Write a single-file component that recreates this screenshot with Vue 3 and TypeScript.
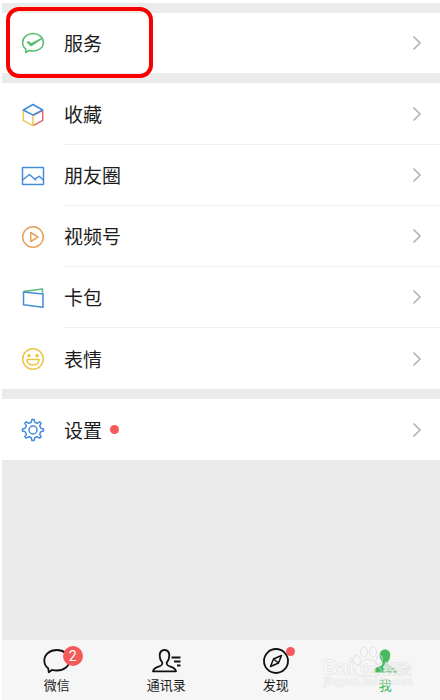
<script setup lang="ts">
import { ref } from 'vue'

interface Item {
  id: string
  label: string
  dot?: boolean
}

interface Tab {
  id: string
  label: string
  badge?: number
  dot?: boolean
}

const groups: Item[][] = [
  [{ id: 'service', label: '服务' }],
  [
    { id: 'favorites', label: '收藏' },
    { id: 'moments', label: '朋友圈' },
    { id: 'channels', label: '视频号' },
    { id: 'cards', label: '卡包' },
    { id: 'stickers', label: '表情' },
  ],
  [{ id: 'settings', label: '设置', dot: true }],
]

const tabs: Tab[] = [
  { id: 'chats', label: '微信', badge: 2 },
  { id: 'contacts', label: '通讯录' },
  { id: 'discover', label: '发现', dot: true },
  { id: 'me', label: '我' },
]

const active = ref('me')
</script>

<template>
  <div class="page">
    <main class="content">
      <section v-for="(group, index) in groups" :key="index" class="group">
        <button v-for="item in group" :key="item.id" type="button" class="row">
          <svg class="icon" viewBox="0 0 24 24" aria-hidden="true">
            <g v-if="item.id === 'service'" stroke="#5abe72">
              <path d="M5 18.3C2.8 16.7 1.6 14.4 1.6 11.7C1.6 6.4 6.2 2.600 12 2.600S22.400 6.400 22.400 11.500S17.800 20 12 20C10.700 20 9.500 19.800 8.400 19.500L4.600 21.500Z" />
              <path d="M6.600 11.300L10.200 14.600L20.800 7.400L10.300 12.800L7.300 10.800Z" fill="#5abe72" />
            </g>
            <g v-else-if="item.id === 'favorites'">
              <path d="M2.300 7.500V17.400L12 22.700V12.500" stroke="#efc359" />
              <path d="M21.700 7.500V17.400L12.700 22.300M12.500 12.200L21.700 7.300" stroke="#e5666b" />
              <path d="M2.300 7L12 1.500L21.700 7L12 12.200Z" stroke="#4388d8" />
            </g>
            <g v-else-if="item.id === 'moments'" stroke="#468cda">
              <rect x="1.500" y="3.500" width="21" height="17" />
              <path d="M1.500 16L8.500 10.500L15.200 16.500M13.500 15.200L18.300 12.300L22.500 16.300" />
            </g>
            <g v-else-if="item.id === 'channels'" stroke="#e6a25b">
              <circle cx="12" cy="12" r="10.300" />
              <path d="M9.700 7.500L17 12L9.700 16.500Z" />
            </g>
            <g v-else-if="item.id === 'cards'">
              <path d="M2.500 5.500L21.500 3V7" stroke="#5abb7b" />
              <path d="M2.500 6L22 8V21.200L2.500 18.700Z" stroke="#468cda" />
            </g>
            <g v-else-if="item.id === 'stickers'" stroke="#edc445">
              <circle cx="12" cy="12" r="10.300" />
              <circle cx="8" cy="8.700" r="1.300" fill="#edc445" stroke-width="1" />
              <circle cx="16" cy="8.700" r="1.300" fill="#edc445" stroke-width="1" />
              <path d="M6 12.600H18C18 16 15.500 18 12 18S6 16 6 12.600Z" />
            </g>
            <g v-else stroke="#468cda">
              <path d="M10.300 4.200L10.900 1.500H13.100L13.700 4.200L16.300 5.300L18.700 3.800L20.200 5.300L18.700 7.700L19.800 10.300L22.500 10.900V13.100L19.800 13.700L18.700 16.300L20.200 18.700L18.700 20.200L16.300 18.700L13.700 19.800L13.100 22.500H10.900L10.300 19.800L7.700 18.700L5.300 20.200L3.800 18.700L5.300 16.300L4.200 13.700L1.500 13.100V10.900L4.200 10.300L5.300 7.700L3.800 5.300L5.300 3.800L7.700 5.300Z" />
              <circle cx="12" cy="12" r="4" />
            </g>
          </svg>
          <span class="body">
            <span>{{ item.label }}</span>
            <span v-if="item.dot" class="dot"></span>
            <svg class="chevron" viewBox="0 0 10 16" aria-hidden="true">
              <path d="M1.500 1.500L8 8L1.500 14.500" />
            </svg>
          </span>
        </button>
      </section>
      <div class="highlight"></div>
    </main>

    <nav class="tabs">
      <button
        v-for="tab in tabs"
        :key="tab.id"
        type="button"
        class="tab"
        :class="{ active: active === tab.id }"
        @click="active = tab.id"
      >
        <span class="tab-icon">
          <svg viewBox="0 0 30 28" aria-hidden="true">
            <path
              v-if="tab.id === 'chats'"
              d="M6.200 21.300C3.700 19.500 2.300 16.900 2.300 13.500C2.300 7.500 7.800 3 14.800 3S27.300 7.500 27.300 13.500S21.800 23.500 14.800 23.500C13 23.500 11.400 23.300 10 22.900L6.800 25.200Z"
            />
            <g v-else-if="tab.id === 'contacts'">
              <path d="M13.500 3C10.300 3 8.700 5.500 8.700 8.700C8.700 11.700 9.800 13.800 11.200 15.300C11.700 17.900 10.400 18.600 7.500 19.700C4.500 20.800 2.500 21.700 2 24.300H25C24.500 21.700 22.500 20.800 19.500 19.700C16.600 18.600 15.300 17.900 15.800 15.300C17.200 13.800 18.300 11.700 18.300 8.700C18.300 5.500 16.700 3 13.500 3Z" />
              <path d="M20.500 10.500H29.500M23 14.500H29.500M26 18.500H29.500" />
            </g>
            <g v-else-if="tab.id === 'discover'">
              <circle cx="15" cy="14" r="12" />
              <path d="M20.500 8.500L17.500 16L9.500 19.500L12.500 12ZM13 12.500L17 15.500" stroke-width="1.500" />
            </g>
            <path
              v-else
              class="solid"
              d="M15 2.500C11.600 2.500 9.800 4.800 9.800 8.300C9.800 11.500 11 13.700 12.500 15.200C12.800 18 11.500 18.700 8.500 19.800C5.500 20.900 3.500 21.800 3.300 25.500H26.700C26.500 21.800 24.500 20.900 21.500 19.800C18.500 18.700 17.200 18 17.500 15.200C19 13.700 20.200 11.500 20.200 8.300C20.200 4.800 18.400 2.500 15 2.500Z"
            />
          </svg>
          <span v-if="tab.badge" class="badge">{{ tab.badge }}</span>
          <span v-if="tab.dot" class="dot tab-dot"></span>
        </span>
        <span>{{ tab.label }}</span>
      </button>
      <svg class="watermark" viewBox="0 0 96 50" aria-hidden="true">
        <g class="paw">
          <ellipse cx="37" cy="20" rx="3.500" ry="4.500" transform="rotate(-20 37 20)" />
          <ellipse cx="44" cy="12" rx="3.500" ry="5" />
          <ellipse cx="53" cy="12" rx="3.500" ry="5" />
          <ellipse cx="59" cy="20" rx="3" ry="4.500" transform="rotate(20 59 20)" />
          <path d="M48 19C43 19 42 23 37 27C33 31 35 36 41 36H55C61 36 63 31 59 27C55 23 53 19 48 19Z" />
        </g>
        <text class="mark" x="3" y="34" font-size="20">Bai</text>
        <text class="mark" x="40" y="33" font-size="13">du</text>
        <text class="mark" x="63" y="34" font-size="14">经验</text>
        <text class="mark url" x="4" y="45" font-size="11">jingyan.baidu.com</text>
      </svg>
    </nav>
  </div>
</template>

<style>
body {
  margin: 0;
  background: #fff;
}
</style>

<style scoped>
.page {
  box-sizing: border-box;
  min-height: 100vh;
  padding: 3px 0 0 2px;
  display: flex;
  flex-direction: column;
  font-family: 'Noto Sans CJK SC', sans-serif;
  color: #1c1c1c;
}

button {
  margin: 0;
  padding: 0;
  border: 0;
  background: none;
  color: inherit;
  font: inherit;
  cursor: pointer;
}

.content {
  position: relative;
  flex: 1;
  display: flex;
  flex-direction: column;
  gap: 10px;
  padding-top: 10px;
  background: #ebebeb;
}

.group {
  background: #fff;
}

.group:nth-child(2) {
  padding-top: 1px;
}

.row {
  display: flex;
  align-items: center;
  gap: 19px;
  width: 100%;
  height: 61px;
  padding-left: 19px;
}

.group:first-child .row {
  height: 60px;
}

.icon {
  width: 24px;
  height: 24px;
  fill: none;
  stroke-width: 1.5;
  stroke-linejoin: round;
}

.body {
  box-sizing: border-box;
  flex: 1;
  align-self: stretch;
  display: flex;
  align-items: center;
  gap: 8px;
  padding-right: 18px;
  font-size: 19px;
  line-height: 28px;
}

.row:not(:last-child) .body {
  border-bottom: 1px solid #f0f0f0;
}

.dot {
  width: 9px;
  height: 9px;
  border-radius: 50%;
  background: #f55a5a;
}

.chevron {
  width: 10px;
  height: 16px;
  margin-left: auto;
  fill: none;
  stroke: #b2b2b2;
  stroke-width: 1.6;
}

.highlight {
  position: absolute;
  top: 4px;
  left: 4px;
  box-sizing: border-box;
  width: 147px;
  height: 71px;
  border: 4px solid #f80000;
  border-radius: 13px;
  pointer-events: none;
}

.tabs {
  position: relative;
  display: grid;
  grid-template-columns: repeat(4, 1fr);
  height: 60px;
  background: #f6f6f6;
}

.tab {
  display: flex;
  flex-direction: column;
  align-items: center;
  padding-top: 7px;
  gap: 1px;
  font-size: 13px;
  line-height: 18px;
}

.tab-icon {
  position: relative;
  width: 30px;
  height: 28px;
}

.tab-icon svg {
  display: block;
  width: 30px;
  height: 28px;
  fill: none;
  stroke: #111;
  stroke-width: 1.8;
  stroke-linejoin: round;
}

.tab-icon .solid {
  fill: #48b95f;
  stroke: none;
}

.active {
  color: #48b95f;
}

.badge {
  position: absolute;
  top: -1px;
  left: 21px;
  width: 20px;
  height: 20px;
  border-radius: 50%;
  background: #f55a5a;
  color: #fff;
  font-family: Roboto, sans-serif;
  font-size: 14px;
  line-height: 20px;
  text-align: center;
}

.tab-dot {
  position: absolute;
  top: 0;
  left: 25px;
}

.watermark {
  position: absolute;
  top: 0;
  right: 24px;
  width: 96px;
  height: 50px;
  pointer-events: none;
}

.paw {
  fill: none;
  stroke: #dedede;
  stroke-opacity: 0.8;
}

.mark {
  font-family: 'Liberation Sans', 'Noto Sans CJK SC', sans-serif;
  font-weight: 700;
  fill: #fafafa;
  fill-opacity: 0.7;
  stroke: #d6d6d6;
  stroke-opacity: 0.7;
  stroke-width: 1;
  paint-order: stroke;
}

.url {
  font-weight: 400;
  fill-opacity: 0.4;
  stroke: #e0e0e0;
  stroke-opacity: 0.5;
}
</style>
